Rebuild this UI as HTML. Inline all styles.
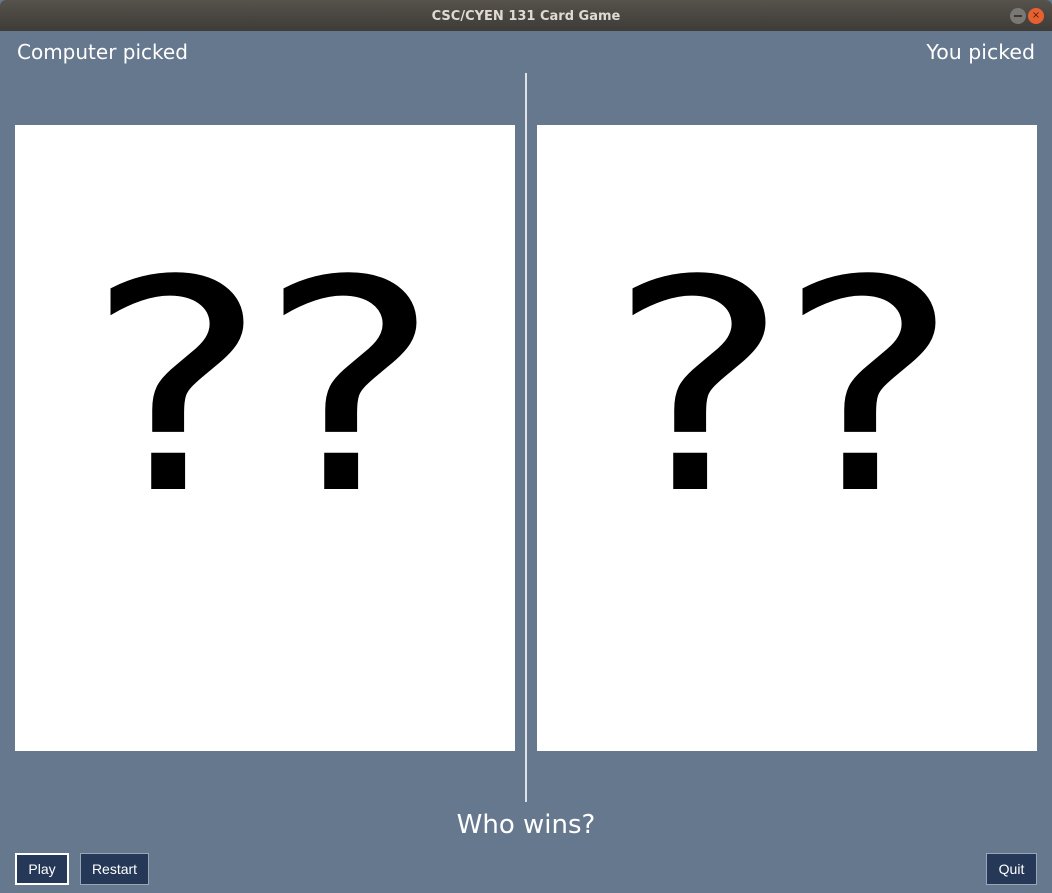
<!DOCTYPE html>
<html><head><meta charset="utf-8"><style>
*{margin:0;padding:0;box-sizing:border-box}
body{width:1052px;height:893px;background:#66788e;position:relative;overflow:hidden;font-family:"DejaVu Sans","Liberation Sans",sans-serif}
.tb{position:absolute;left:0;top:0;width:1052px;height:31px;background:linear-gradient(#56524c,#3e3c38);border-radius:6px 6px 0 0;color:#dfdbd2;font-size:13px;font-weight:bold;text-align:center;line-height:33px}
.min{position:absolute;left:1010px;top:8px;width:16px;height:16px;border-radius:50%;background:#7a7873}
.min:after{content:"";position:absolute;left:4px;top:7px;width:8px;height:2px;background:#3a3835}
.cls{position:absolute;left:1028px;top:8px;width:16px;height:16px;border-radius:50%;background:#e9602f;color:#4a2010;font-size:10px;line-height:16px;text-align:center}
.lbl{position:absolute;color:#fff;font-size:20px}
.card{position:absolute;top:125px;width:500px;height:626px;background:#fff;overflow:hidden}
.q{position:absolute;top:117px;font-family:"DejaVu Sans",sans-serif;font-size:292px;line-height:1;color:#000;transform:scaleX(1.17);transform-origin:0 0}
.div{position:absolute;left:525px;top:73px;width:2px;height:729px;background:#dfe3e8}
.btn{position:absolute;top:853px;height:32px;background:#253858;border:1px solid #9aa6b6;color:#fff;font-family:"Liberation Sans",sans-serif;font-size:14px;text-align:center;line-height:30px}
</style></head><body>
<div class="tb">CSC/CYEN 131 Card Game</div>
<div class="min"></div><div class="cls">×</div>
<div class="lbl" style="left:17px;top:40px;font-size:20px">Computer picked</div>
<div class="lbl" style="right:17px;top:40px;font-size:20.5px">You picked</div>
<div class="card" style="left:15px"><span class="q" style="left:71px">?</span><span class="q" style="left:244px">?</span></div>
<div class="card" style="left:537px"><span class="q" style="left:71px">?</span><span class="q" style="left:241px">?</span></div>
<div class="div"></div>
<div class="lbl" style="left:0;width:1052px;text-align:center;top:810px;font-size:26px">Who wins?</div>
<div class="btn" style="left:15px;width:54px;border:2px solid #fff;line-height:28px">Play</div>
<div class="btn" style="left:80px;width:69px">Restart</div>
<div class="btn" style="left:986px;width:51px">Quit</div>
</body></html>
